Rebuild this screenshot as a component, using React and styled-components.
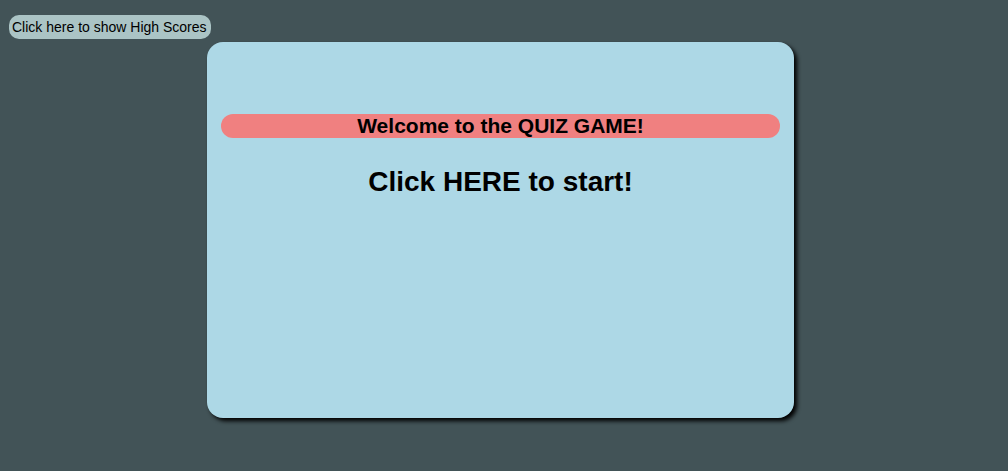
import React from "react";
import styled, { createGlobalStyle } from "styled-components";

const Global = createGlobalStyle`
  html, body { margin: 0; padding: 0; }
  body {
    background: #425357;
    font-family: "Liberation Sans", Arial, sans-serif;
    min-height: 471px;
  }
`;

const Page = styled.div`
  padding: 15px 9px 0;
  display: flex;
  flex-direction: column;
  align-items: flex-start;
`;

const ScoresButton = styled.button`
  font-family: "Liberation Sans", Arial, sans-serif;
  font-size: 14px;
  line-height: 16px;
  color: #000;
  background: #abc4c5;
  border: none;
  border-radius: 10px;
  padding: 4px 4px 4px 3px;
  height: 24px;
  cursor: pointer;
`;

const Card = styled.div`
  margin: 3px 0 0 198px;
  width: 587px;
  height: 376px;
  box-sizing: border-box;
  background: #add8e6;
  border-radius: 16px;
  box-shadow: 3px 3px 4px #000;
  padding: 72px 14px 0;
  display: flex;
  flex-direction: column;
  align-items: stretch;
`;

const Banner = styled.h2`
  margin: 0;
  height: 24px;
  background: #f08080;
  border-radius: 12px;
  font-size: 21px;
  line-height: 24px;
  font-weight: bold;
  text-align: center;
  color: #000;
`;

const Start = styled.h1`
  margin: 28px 0 0;
  font-size: 28px;
  line-height: 32px;
  font-weight: bold;
  text-align: center;
  color: #000;
  cursor: pointer;
`;

export default function App() {
  return (
    <>
      <Global />
      <Page>
        <ScoresButton>Click here to show High Scores</ScoresButton>
        <Card>
          <Banner>Welcome to the QUIZ GAME!</Banner>
          <Start>Click HERE to start!</Start>
        </Card>
      </Page>
    </>
  );
}
